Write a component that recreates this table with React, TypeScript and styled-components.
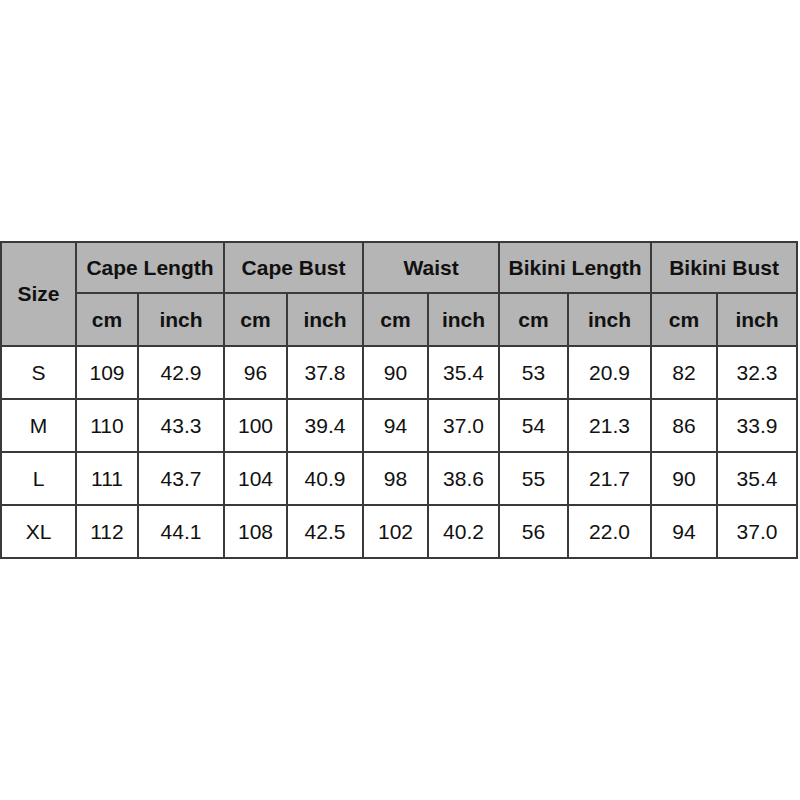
import React from 'react';
import styled, { createGlobalStyle } from 'styled-components';

const GlobalStyle = createGlobalStyle`
  html, body {
    margin: 0;
    padding: 0;
    background: #ffffff;
  }
`;

const Page = styled.div`
  width: 800px;
  height: 800px;
  padding-top: 241px;
  box-sizing: border-box;
  background: #ffffff;
  font-family: 'Liberation Sans', Arial, sans-serif;
`;

const Table = styled.table`
  border-collapse: collapse;
  table-layout: fixed;
  width: 796px;
  color: #111111;
  font-size: 21px;
`;

const HeadCell = styled.th<{ $tall?: boolean }>`
  background: #b5b5b5;
  border: 2px solid #3a3a3a;
  font-weight: bold;
  text-align: center;
  padding: 0;
  height: ${({ $tall }) => ($tall ? '102px' : '49px')};
`;

const Cell = styled.td`
  border: 2px solid #3a3a3a;
  text-align: center;
  padding: 0;
  height: 51px;
`;

const groups = ['Cape Length', 'Cape Bust', 'Waist', 'Bikini Length', 'Bikini Bust'];
const widths = [75, 62, 86, 63, 76, 65, 71, 69, 83, 66, 80];

const rows = [
  ['S', '109', '42.9', '96', '37.8', '90', '35.4', '53', '20.9', '82', '32.3'],
  ['M', '110', '43.3', '100', '39.4', '94', '37.0', '54', '21.3', '86', '33.9'],
  ['L', '111', '43.7', '104', '40.9', '98', '38.6', '55', '21.7', '90', '35.4'],
  ['XL', '112', '44.1', '108', '42.5', '102', '40.2', '56', '22.0', '94', '37.0'],
];

export default function App() {
  return (
    <>
      <GlobalStyle />
      <Page>
        <Table>
          <colgroup>
            {widths.map((w, i) => (
              <col key={i} style={{ width: w }} />
            ))}
          </colgroup>
          <thead>
            <tr>
              <HeadCell rowSpan={2} $tall>Size</HeadCell>
              {groups.map((g) => (
                <HeadCell key={g} colSpan={2}>{g}</HeadCell>
              ))}
            </tr>
            <tr>
              {groups.map((g) => (
                <React.Fragment key={g}>
                  <HeadCell style={{ height: 51 }}>cm</HeadCell>
                  <HeadCell>inch</HeadCell>
                </React.Fragment>
              ))}
            </tr>
          </thead>
          <tbody>
            {rows.map((r) => (
              <tr key={r[0]}>
                {r.map((v, i) => (
                  <Cell key={i}>{v}</Cell>
                ))}
              </tr>
            ))}
          </tbody>
        </Table>
      </Page>
    </>
  );
}
